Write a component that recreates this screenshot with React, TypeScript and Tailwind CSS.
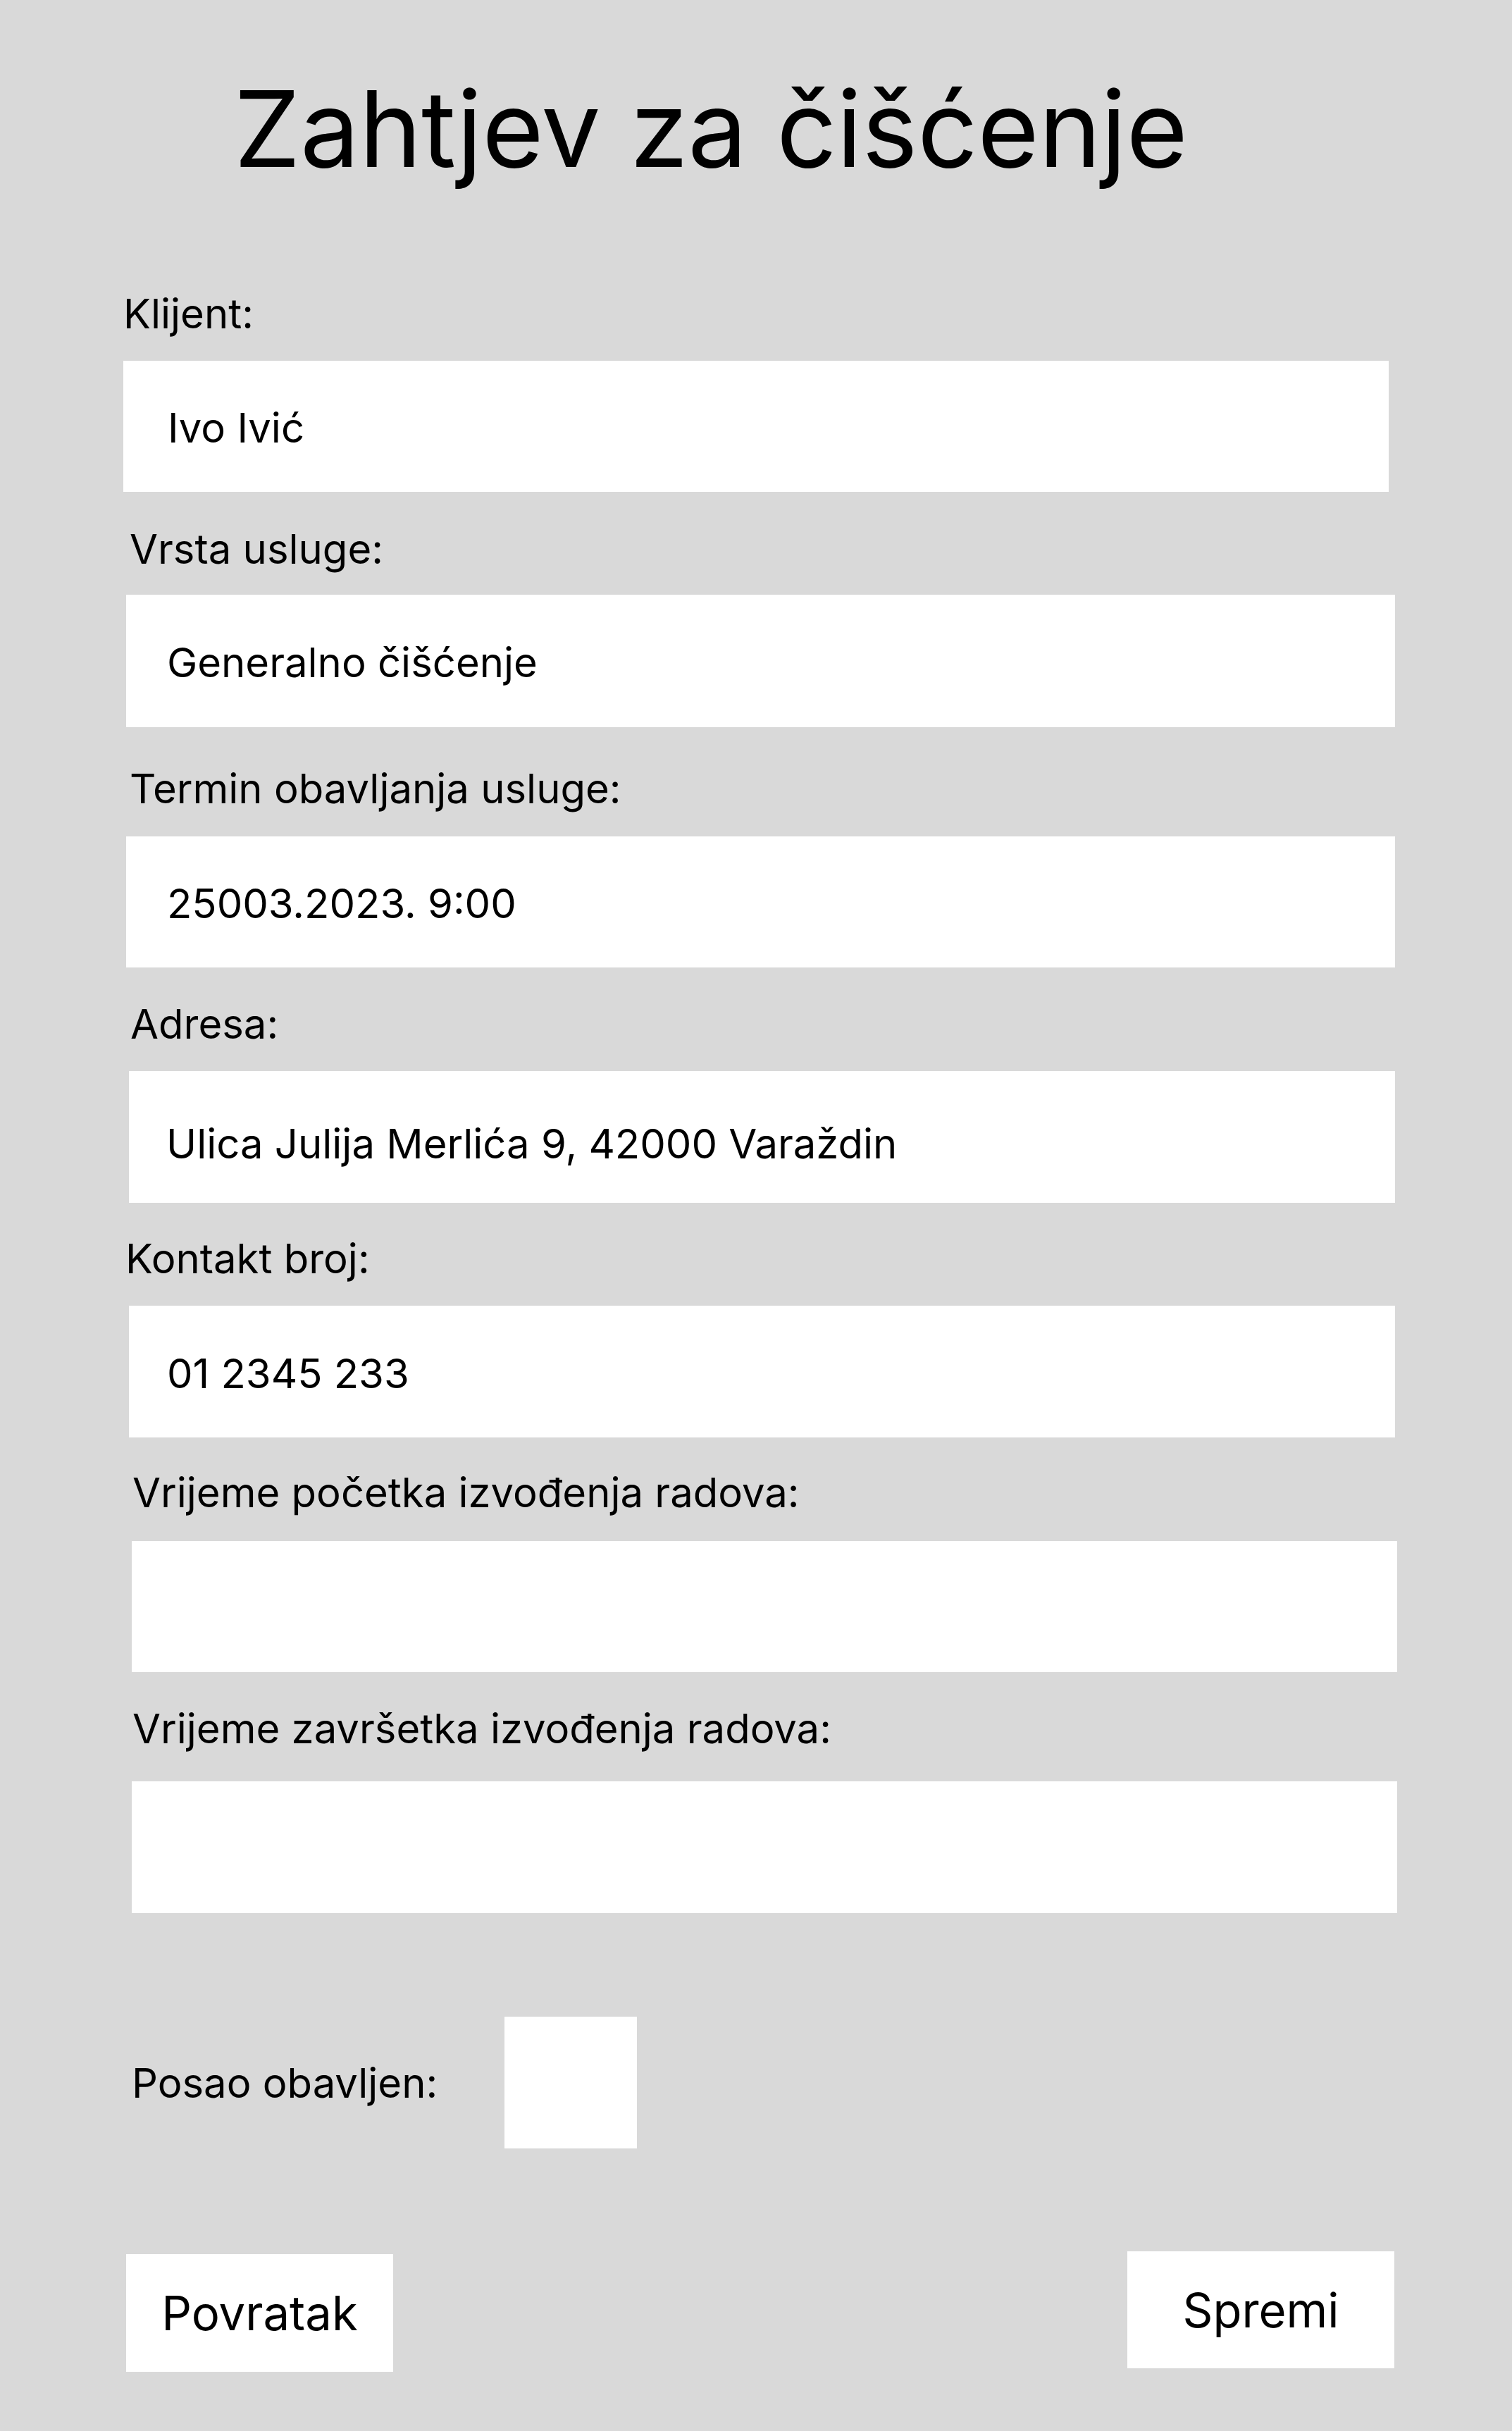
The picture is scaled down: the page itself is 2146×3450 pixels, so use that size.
import { memo } from 'react';

interface FieldRow {
  label: string;
  value: string;
  rowClass: string;
  labelClass: string;
  boxClass: string;
}

const fields: FieldRow[] = [
  {
    label: 'Klijent:',
    value: 'Ivo Ivić',
    rowClass: 'mt-[152px]',
    labelClass: 'ml-[175px] mb-[32px]',
    boxClass: 'ml-[175px] w-[1796px] h-[186px] pl-[63px] pt-[4px]',
  },
  {
    label: 'Vrsta usluge:',
    value: 'Generalno čišćenje',
    rowClass: 'mt-[46px]',
    labelClass: 'ml-[184px] mb-[30px]',
    boxClass: 'ml-[179px] w-[1801px] h-[188px] pl-[58px] pt-[4px]',
  },
  {
    label: 'Termin obavljanja usluge:',
    value: '25003.2023. 9:00',
    rowClass: 'mt-[52px]',
    labelClass: 'ml-[184px] mb-[33px]',
    boxClass: 'ml-[179px] w-[1801px] h-[186px] pl-[58px] pt-[4px]',
  },
  {
    label: 'Adresa:',
    value: 'Ulica Julija Merlića 9, 42000 Varaždin',
    rowClass: 'mt-[45px]',
    labelClass: 'ml-[185px] mb-[32px]',
    boxClass: 'ml-[183px] w-[1797px] h-[187px] pl-[53px] pt-[18px]',
  },
  {
    label: 'Kontakt broj:',
    value: '01 2345 233',
    rowClass: 'mt-[44px]',
    labelClass: 'ml-[178px] mb-[32px]',
    boxClass: 'ml-[183px] w-[1797px] h-[187px] pl-[54px] pt-[4px]',
  },
  {
    label: 'Vrijeme početka izvođenja radova:',
    value: '',
    rowClass: 'mt-[43px]',
    labelClass: 'ml-[188px] mb-[34px]',
    boxClass: 'ml-[187px] w-[1796px] h-[186px] pl-[54px]',
  },
  {
    label: 'Vrijeme završetka izvođenja radova:',
    value: '',
    rowClass: 'mt-[45px]',
    labelClass: 'ml-[188px] mb-[40px]',
    boxClass: 'ml-[187px] w-[1796px] h-[187px] pl-[54px]',
  },
];

const Field = memo<FieldRow>(({ label, value, rowClass, labelClass, boxClass }) => (
  <div className={rowClass}>
    <div className={`text-[58px] leading-[70px] ${labelClass}`}>{label}</div>
    <div className={`flex items-center bg-white text-[58px] leading-[70px] ${boxClass}`}>{value}</div>
  </div>
));

Field.displayName = 'Field';

export default function App() {
  return (
    <div className="min-h-[3450px] w-full bg-[#d9d9d9] pt-[108px] font-[Inter,sans-serif] text-black">
      <h1 className="ml-[332px] text-[150px] leading-none font-normal tracking-[-0.4px]">Zahtjev za čišćenje</h1>

      {fields.map((f) => (
        <Field key={f.label} {...f} />
      ))}

      <div className="mt-[147px] flex items-center">
        <span className="ml-[187px] text-[58px] leading-[70px]">Posao obavljen:</span>
        <div className="ml-auto mr-[1242px] h-[187px] w-[188px] bg-white" role="checkbox" aria-checked="false" />
      </div>

      <div className="mt-[146px] flex items-start justify-between pl-[179px] pr-[167px]">
        <button className="mt-[4px] flex h-[167px] w-[379px] items-center justify-center bg-white text-[67px] leading-none">
          Povratak
        </button>
        <button className="flex h-[166px] w-[379px] items-center justify-center bg-white text-[67px] leading-none">
          Spremi
        </button>
      </div>
    </div>
  );
}
